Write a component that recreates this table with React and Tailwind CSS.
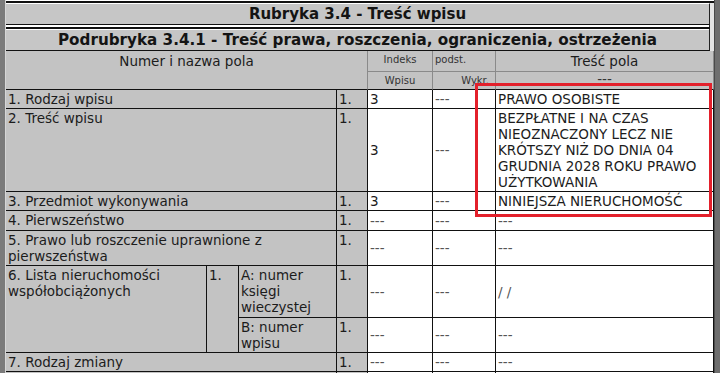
import React from 'react';

const font = { fontFamily: '"DejaVu Sans", Verdana, sans-serif' };

function Label({ className = '', children }) {
  return (
    <div className={`bg-[#c3c3c3] border-r border-b border-[#111] pl-[2px] pt-[1px] leading-[16px] text-[#1c1c1c] ${className}`}>
      {children}
    </div>
  );
}

function Data({ className = '', children }) {
  return (
    <div className={`bg-white border-r border-b border-[#111] pl-[2px] flex items-center leading-[16px] text-[#1c1c1c] ${className}`}>
      {children}
    </div>
  );
}

const Dash = () => <span className="text-[#555]">---</span>;

export default function App() {
  const rows = [
    { n: '1. Rodzaj wpisu', idx: '3', val: 'PRAWO OSOBISTE' },
    {
      n: '2. Treść wpisu',
      idx: '3',
      val: 'BEZPŁATNE I NA CZAS NIEOZNACZONY LECZ NIE KRÓTSZY NIŻ DO DNIA 04 GRUDNIA 2028 ROKU PRAWO UŻYTKOWANIA'
    },
    { n: '3. Przedmiot wykonywania', idx: '3', val: 'NINIEJSZA NIERUCHOMOŚĆ' },
    { n: '4. Pierwszeństwo' },
    { n: '5. Prawo lub roszczenie uprawnione z pierwszeństwa' }
  ];

  return (
    <div className="relative w-[720px] h-[373px] overflow-hidden flex bg-[#707070] text-[13.5px]" style={font}>
      {/* left window edge */}
      <div className="w-[5px] shrink-0 bg-[#7b7b7b]" />
      <div className="w-[1px] shrink-0 bg-[#d6d6d6]" />

      <div className="w-[708px] shrink-0 bg-[#e4e4e4]">
        {/* section headers */}
        <div className="h-[1px] bg-white" />
        <div className="h-[2px] bg-[#111]" />
        <div className="h-[22px] mr-[4px] bg-[#c6c6c6] border-t border-white border-b border-b-[#111] border-r border-r-[#222] flex items-center justify-center font-bold text-[15px] text-[#141414]">
          Rubryka 3.4 - Treść wpisu
        </div>
        <div className="h-[2px] mr-[4px] bg-white border-r border-r-[#222]" />
        <div className="h-[2px] mr-[4px] bg-[#111]" />
        <div className="h-[1px] mr-[4px] bg-white border-r border-r-[#222]" />
        <div className="h-[21px] mr-[4px] bg-[#c6c6c6] border-b border-[#111] border-r border-r-[#222] flex items-center justify-center font-bold text-[15.2px] text-[#141414]">
          Podrubryka 3.4.1 - Treść prawa, roszczenia, ograniczenia, ostrzeżenia
        </div>

        {/* field grid */}
        <div className="grid grid-cols-[201px_32px_98px_31px_65px_63px_218px] grid-rows-[21px_18px_19px_83px_19px_20px_35px_52px_35px_19px_10px]">
          <div className="col-span-4 row-span-2 bg-[#c3c3c3] border-r border-[#8a8a8a] border-b border-b-[#111] text-center pt-[2px] leading-[16px] text-[#1c1c1c]">
            Numer i nazwa pola
          </div>
          <div className="bg-[#c3c3c3] border-r border-b border-[#8a8a8a] text-center text-[10px] leading-[18px] text-[#333]">Indeks</div>
          <div className="bg-[#c3c3c3] border-r border-b border-[#8a8a8a] pl-[2px] text-[10px] leading-[18px] text-[#333]">podst.</div>
          <div className="bg-[#c3c3c3] border-r border-b border-[#8a8a8a] text-center leading-[20px] text-[#1c1c1c]">Treść pola</div>
          <div className="bg-[#c3c3c3] border-r border-[#8a8a8a] border-b border-b-[#111] text-center text-[10px] leading-[17px] text-[#333]">Wpisu</div>
          <div className="bg-[#c3c3c3] border-r border-[#8a8a8a] border-b border-b-[#111] text-right pr-[6px] text-[10px] leading-[17px] text-[#333]">Wykr.</div>
          <div className="bg-[#c3c3c3] border-r border-[#8a8a8a] border-b border-b-[#111] text-center leading-[15px] text-[#333]">---</div>

          {rows.map((r) => (
            <React.Fragment key={r.n}>
              <Label className="col-span-3">{r.n}</Label>
              <Label>1.</Label>
              <Data>{r.idx ? r.idx : <Dash />}</Data>
              <Data><Dash /></Data>
              <Data>{r.val ? r.val : <Dash />}</Data>
            </React.Fragment>
          ))}

          <Label className="row-span-2">6. Lista nieruchomości współobciążonych</Label>
          <Label className="row-span-2">1.</Label>
          <Label>A: numer księgi wieczystej</Label>
          <Label>1.</Label>
          <Data><Dash /></Data>
          <Data><Dash /></Data>
          <Data><span className="text-[#555]">/ /</span></Data>
          <Label>B: numer wpisu</Label>
          <Label>1.</Label>
          <Data><Dash /></Data>
          <Data><Dash /></Data>
          <Data><Dash /></Data>

          <Label className="col-span-3">7. Rodzaj zmiany</Label>
          <Label>1.</Label>
          <Data><Dash /></Data>
          <Data><Dash /></Data>
          <Data><Dash /></Data>

          <Label className="col-span-3" />
          <Label />
          <Data />
          <Data />
          <Data />
        </div>
      </div>

      {/* right window edge */}
      <div className="w-[1px] shrink-0 bg-[#4a4a4a]" />
      <div className="flex-1 bg-[#6e6e6e]" />

      {/* highlight frame */}
      <div className="absolute left-[475px] top-[83px] w-[237px] h-[134px] border-[3px] border-[#e3202b]" />
    </div>
  );
}
